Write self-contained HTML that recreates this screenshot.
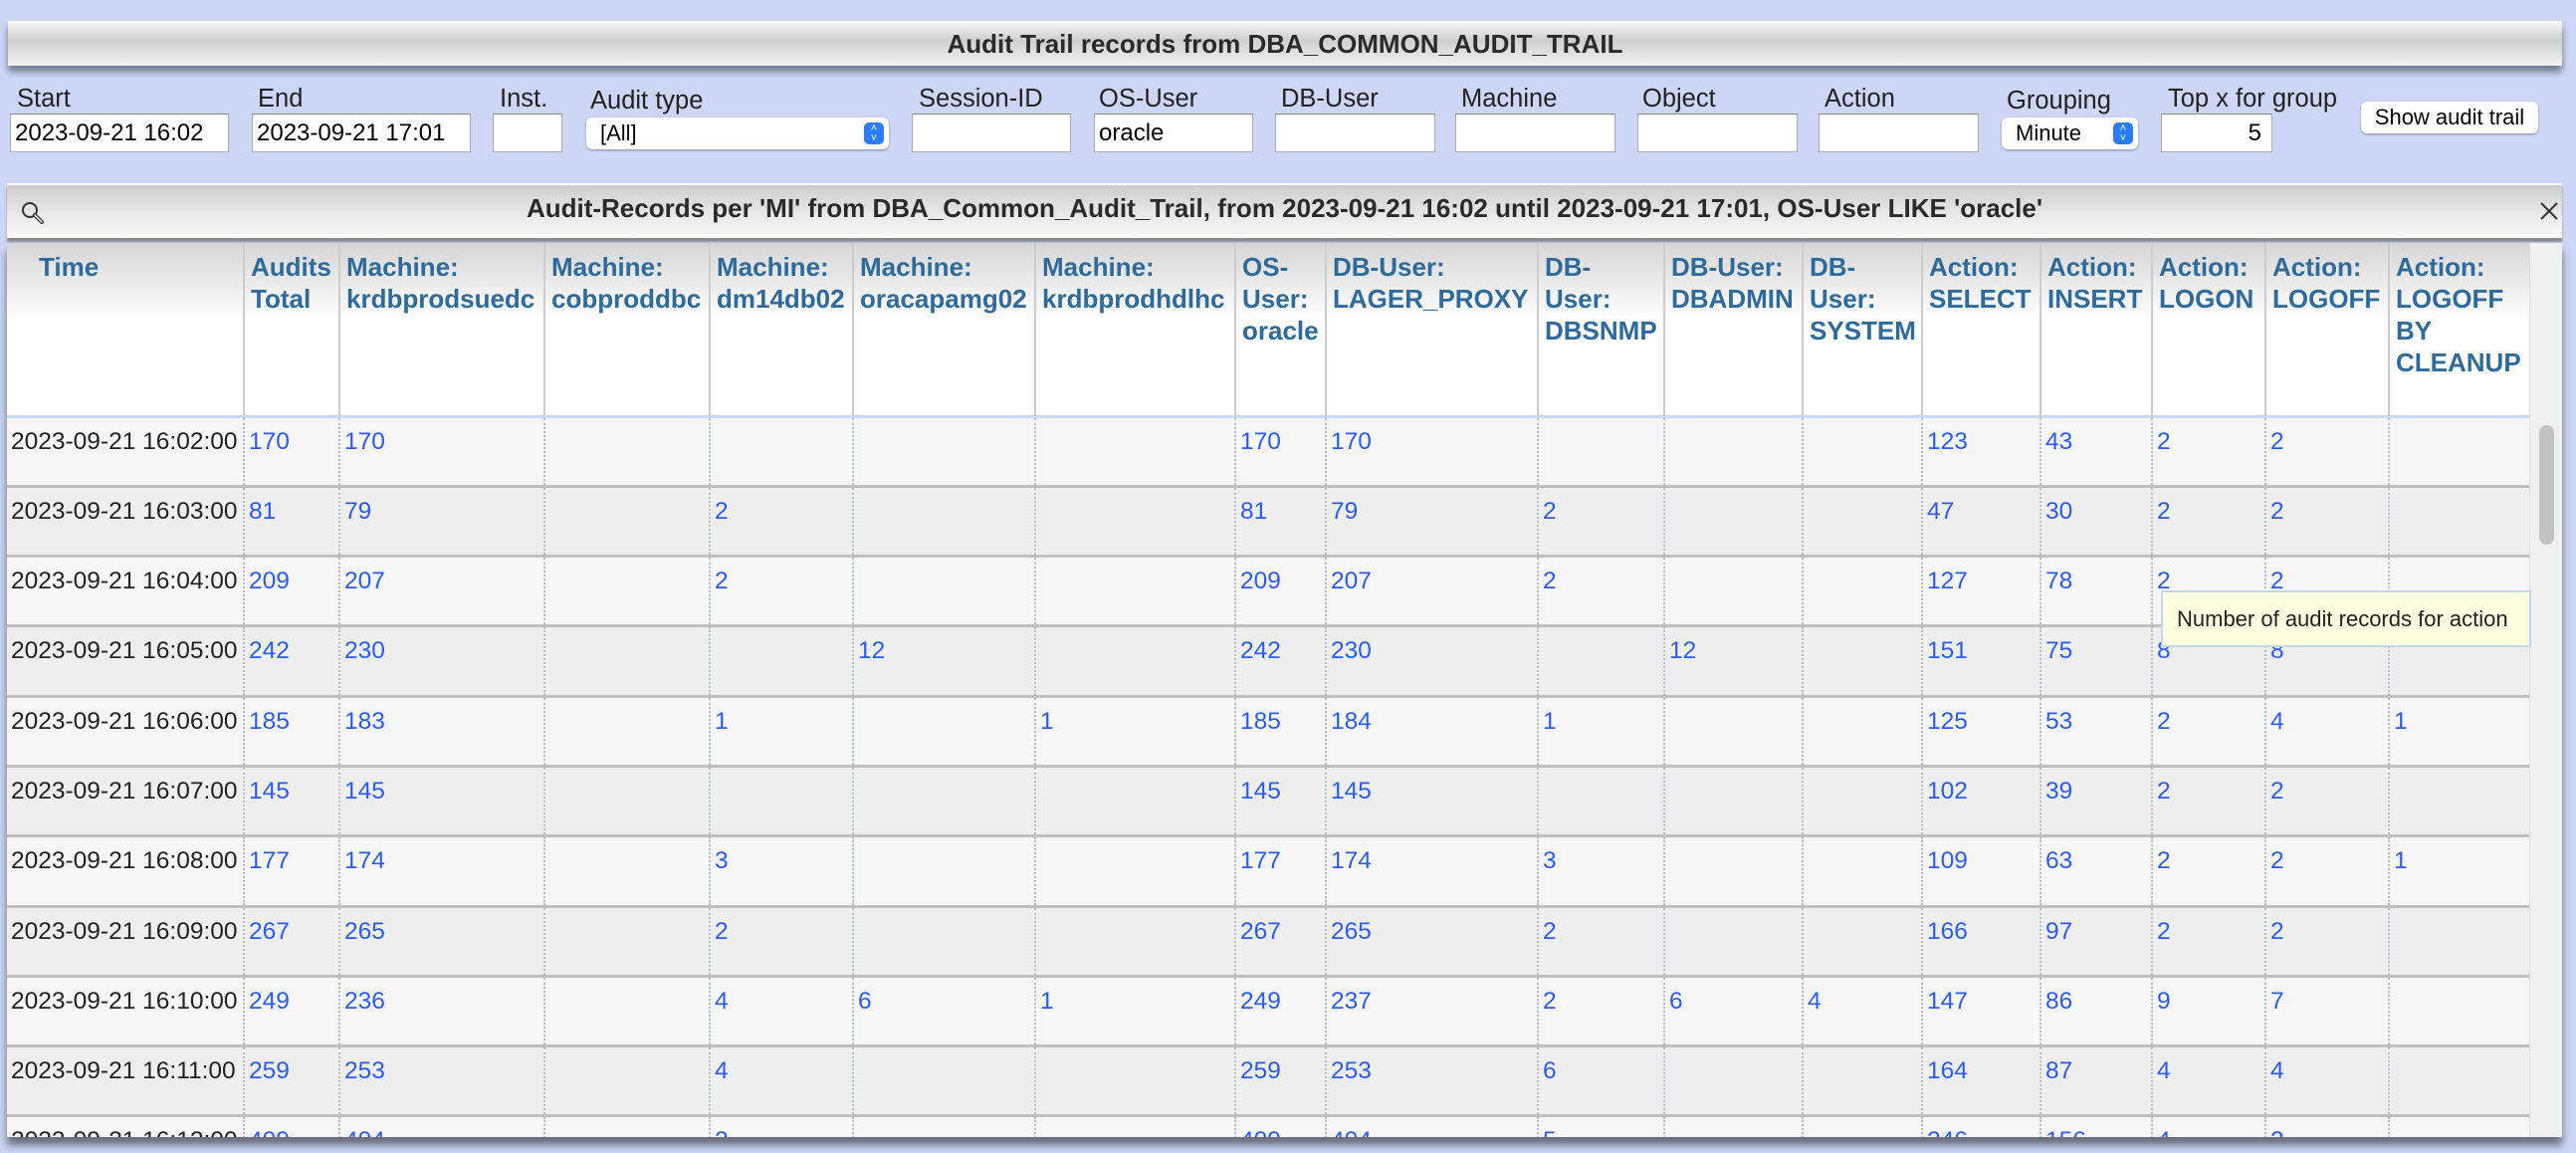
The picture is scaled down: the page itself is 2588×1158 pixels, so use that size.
<!DOCTYPE html>
<html><head><meta charset="utf-8"><style>
*{box-sizing:border-box;margin:0;padding:0}
body{width:2588px;height:1158px;background:#cdd7f5;font-family:"Liberation Sans",sans-serif;position:relative;overflow:hidden}
.abs{position:absolute}
.title{left:8px;top:21px;width:2566px;height:45px;background:linear-gradient(#f4f4f4,#cfcfcf 40%,#f2f2f2);border-top:2px solid #fff;box-shadow:0 6px 7px rgba(0,0,0,.45);text-align:center;font-weight:bold;font-size:26px;line-height:43px;color:#2a2a2a}
.lbl{font-size:25.5px;color:#222;top:85px}
.inp{background:#fff;border:1px solid #aaa;border-top-color:#888;top:114px;height:39px;font-size:24px;line-height:37px;padding-left:4px;color:#000}
.sel{background:#fff;border-radius:6px;box-shadow:0 1px 2px rgba(0,0,0,.35);top:118px;height:32px;font-size:22px;line-height:32px;padding-left:14px}
.arr{position:absolute;right:5px;top:5px;width:20px;height:22px;background:#2a7cf7;border-radius:5px;color:#fff;font-size:11px;line-height:10px;text-align:center;padding-top:1px}
.btn{left:2372px;top:102px;width:178px;height:32px;background:#fff;border-radius:6px;box-shadow:0 1px 2px rgba(0,0,0,.35);font-size:22px;line-height:31px;text-align:center}
.ph{left:7px;top:184px;width:2567px;height:55px;background:linear-gradient(#cdcdcd,#e6e6e6 50%,#fafafa);border-top:2px solid #fff;box-shadow:0 4px 2px #8a8a8a;text-align:center;font-weight:bold;font-size:26px;line-height:47px;color:#2a2a2a}
.body{left:7px;top:244px;width:2567px;height:898px;background:#e8f2fc;overflow:hidden;box-shadow:0 8px 8px rgba(0,0,0,.5)}
table{border-collapse:collapse;table-layout:fixed;position:absolute;left:0;top:0;width:2536px}
th{height:174px;vertical-align:top;text-align:left;font-weight:bold;color:#2e6b9c;font-size:26px;line-height:32px;padding:8px 2px 0 6px;background:linear-gradient(#d6d6d6,#fff 45%);border-left:2px solid #ccc;border-bottom:3px solid #c4d9ee;white-space:nowrap;overflow:hidden}
td{height:70.3px;vertical-align:top;font-size:24.5px;line-height:28px;padding:10px 2px 0 4px;color:#2a5cf5;border-left:2px dotted #bbb;border-bottom:3px solid #bfbfbf;white-space:nowrap;overflow:hidden}
td:first-child{color:#222;border-left:none}
tr:nth-child(even) td{background:#f6f6f6}
tr:nth-child(odd) td{background:#eeeeee}
.sb{left:2534px;top:0;width:33px;height:898px;background:#f0f0f0;border-left:1px solid #ddd}
.thumb{left:2544px;top:183px;width:15px;height:120px;border-radius:8px;background:#c2c2c2}
.tip{left:2171px;top:593px;width:372px;height:57px;background:#fdfde0;border:2px solid #c2d8ee;font-size:22px;line-height:53px;padding-left:14px;color:#222}
</style></head><body>
<div class="abs title">Audit Trail records from DBA_COMMON_AUDIT_TRAIL</div>

<div class="abs lbl" style="left:17px">Start</div>
<div class="abs lbl" style="left:259px">End</div>
<div class="abs lbl" style="left:502px">Inst.</div>
<div class="abs lbl" style="left:593px;top:87px">Audit type</div>
<div class="abs lbl" style="left:923px">Session-ID</div>
<div class="abs lbl" style="left:1104px">OS-User</div>
<div class="abs lbl" style="left:1287px">DB-User</div>
<div class="abs lbl" style="left:1468px">Machine</div>
<div class="abs lbl" style="left:1650px">Object</div>
<div class="abs lbl" style="left:1833px">Action</div>
<div class="abs lbl" style="left:2016px;top:87px">Grouping</div>
<div class="abs lbl" style="left:2178px">Top x for group</div>

<div class="abs inp" style="left:10px;width:220px">2023-09-21 16:02</div>
<div class="abs inp" style="left:253px;width:220px">2023-09-21 17:01</div>
<div class="abs inp" style="left:495px;width:70px"></div>
<div class="abs sel" style="left:589px;width:304px">[All]<div class="arr">˄<br>˅</div></div>
<div class="abs inp" style="left:916px;width:160px"></div>
<div class="abs inp" style="left:1099px;width:160px">oracle</div>
<div class="abs inp" style="left:1281px;width:161px"></div>
<div class="abs inp" style="left:1462px;width:161px"></div>
<div class="abs inp" style="left:1645px;width:161px"></div>
<div class="abs inp" style="left:1827px;width:161px"></div>
<div class="abs sel" style="left:2011px;width:137px">Minute<div class="arr">˄<br>˅</div></div>
<div class="abs inp" style="left:2171px;width:112px;text-align:right;padding-right:10px">5</div>
<div class="abs btn">Show audit trail</div>

<div class="abs ph">Audit-Records per 'MI' from DBA_Common_Audit_Trail, from 2023-09-21 16:02 until 2023-09-21 17:01, OS-User LIKE 'oracle'
<svg class="abs" style="left:14px;top:16px" width="26" height="26" viewBox="0 0 26 26"><circle cx="9" cy="9" r="7" fill="none" stroke="#333" stroke-width="2"/><path d="M14 14 L21 21" stroke="#333" stroke-width="4" stroke-linecap="round"/><path d="M14 14 L21 21" stroke="#eee" stroke-width="1.5" stroke-linecap="round"/></svg>
<svg class="abs" style="left:2545px;top:17px" width="18" height="18" viewBox="0 0 18 18"><path d="M1 1L17 17M17 1L1 17" stroke="#333" stroke-width="2"/></svg>
</div>

<div class="abs body">
<table>
<colgroup><col style="width:238px"><col style="width:96px"><col style="width:206px"><col style="width:166px"><col style="width:144px"><col style="width:183px"><col style="width:201px"><col style="width:91px"><col style="width:213px"><col style="width:127px"><col style="width:139px"><col style="width:120px"><col style="width:119px"><col style="width:112px"><col style="width:114px"><col style="width:124px"><col style="width:143px"></colgroup>
<tr><th style="border-left:none;padding-left:32px">Time</th><th>Audits<br>Total</th><th>Machine:<br>krdbprodsuedc</th><th>Machine:<br>cobproddbc</th><th>Machine:<br>dm14db02</th><th>Machine:<br>oracapamg02</th><th>Machine:<br>krdbprodhdlhc</th><th>OS-<br>User:<br>oracle</th><th>DB-User:<br>LAGER_PROXY</th><th>DB-<br>User:<br>DBSNMP</th><th>DB-User:<br>DBADMIN</th><th>DB-<br>User:<br>SYSTEM</th><th>Action:<br>SELECT</th><th>Action:<br>INSERT</th><th>Action:<br>LOGON</th><th>Action:<br>LOGOFF</th><th>Action:<br>LOGOFF<br>BY<br>CLEANUP</th></tr>
<tr><td>2023-09-21 16:02:00</td><td>170</td><td>170</td><td></td><td></td><td></td><td></td><td>170</td><td>170</td><td></td><td></td><td></td><td>123</td><td>43</td><td>2</td><td>2</td><td></td></tr>
<tr><td>2023-09-21 16:03:00</td><td>81</td><td>79</td><td></td><td>2</td><td></td><td></td><td>81</td><td>79</td><td>2</td><td></td><td></td><td>47</td><td>30</td><td>2</td><td>2</td><td></td></tr>
<tr><td>2023-09-21 16:04:00</td><td>209</td><td>207</td><td></td><td>2</td><td></td><td></td><td>209</td><td>207</td><td>2</td><td></td><td></td><td>127</td><td>78</td><td>2</td><td>2</td><td></td></tr>
<tr><td>2023-09-21 16:05:00</td><td>242</td><td>230</td><td></td><td></td><td>12</td><td></td><td>242</td><td>230</td><td></td><td>12</td><td></td><td>151</td><td>75</td><td>8</td><td>8</td><td></td></tr>
<tr><td>2023-09-21 16:06:00</td><td>185</td><td>183</td><td></td><td>1</td><td></td><td>1</td><td>185</td><td>184</td><td>1</td><td></td><td></td><td>125</td><td>53</td><td>2</td><td>4</td><td>1</td></tr>
<tr><td>2023-09-21 16:07:00</td><td>145</td><td>145</td><td></td><td></td><td></td><td></td><td>145</td><td>145</td><td></td><td></td><td></td><td>102</td><td>39</td><td>2</td><td>2</td><td></td></tr>
<tr><td>2023-09-21 16:08:00</td><td>177</td><td>174</td><td></td><td>3</td><td></td><td></td><td>177</td><td>174</td><td>3</td><td></td><td></td><td>109</td><td>63</td><td>2</td><td>2</td><td>1</td></tr>
<tr><td>2023-09-21 16:09:00</td><td>267</td><td>265</td><td></td><td>2</td><td></td><td></td><td>267</td><td>265</td><td>2</td><td></td><td></td><td>166</td><td>97</td><td>2</td><td>2</td><td></td></tr>
<tr><td>2023-09-21 16:10:00</td><td>249</td><td>236</td><td></td><td>4</td><td>6</td><td>1</td><td>249</td><td>237</td><td>2</td><td>6</td><td>4</td><td>147</td><td>86</td><td>9</td><td>7</td><td></td></tr>
<tr><td>2023-09-21 16:11:00</td><td>259</td><td>253</td><td></td><td>4</td><td></td><td></td><td>259</td><td>253</td><td>6</td><td></td><td></td><td>164</td><td>87</td><td>4</td><td>4</td><td></td></tr>
<tr><td>2023-09-21 16:12:00</td><td>409</td><td>404</td><td></td><td>2</td><td></td><td></td><td>409</td><td>404</td><td>5</td><td></td><td></td><td>246</td><td>156</td><td>4</td><td>2</td><td></td></tr>
</table>
<div class="abs sb"></div>
<div class="abs thumb"></div>
</div>
<div class="abs tip">Number of audit records for action</div>
</body></html>
